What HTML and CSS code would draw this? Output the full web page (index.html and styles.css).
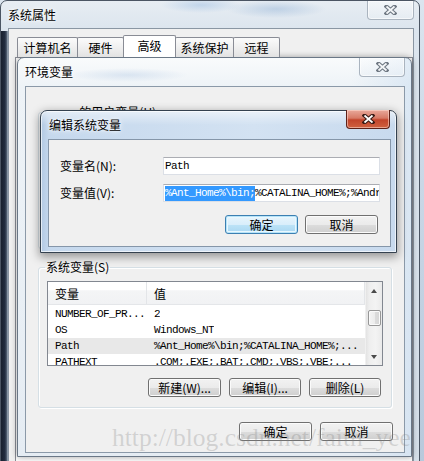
FILE: index.html
```html
<!DOCTYPE html>
<html>
<head>
<meta charset="utf-8">
<title>系统属性</title>
<link rel="stylesheet" href="styles.css">
</head>
<body>
<div class="win outer">
  <div class="titlebar"><span class="title">系统属性</span></div>
  <div class="close inactive"><svg width="13" height="10" viewBox="0 0 13 10"><path d="M2.5 1.5L10.5 8.5M10.5 1.5L2.5 8.5" class="xo"/><path d="M2.5 1.5L10.5 8.5M10.5 1.5L2.5 8.5" class="xi"/></svg></div>
  <div class="client outer-client">
    <div class="tabs">
      <div class="tab t1">计算机名</div>
      <div class="tab t2">硬件</div>
      <div class="tab t3 sel">高级</div>
      <div class="tab t4">系统保护</div>
      <div class="tab t5">远程</div>
    </div>
    <div class="tabpage"></div>
  </div>
</div>

<div class="win env">
  <div class="titlebar"><span class="title">环境变量</span></div>
  <div class="close inactive env-close"><svg width="13" height="10" viewBox="0 0 13 10"><path d="M2.5 1.5L10.5 8.5M10.5 1.5L2.5 8.5" class="xo"/><path d="M2.5 1.5L10.5 8.5M10.5 1.5L2.5 8.5" class="xi"/></svg></div>
  <div class="client env-client">
    <fieldset class="group user-group">
      <legend class="user-legend">e 的用户变量(U)</legend>
    </fieldset>
    <fieldset class="group sys-group">
      <legend>系统变量(S)</legend>
      <div class="list">
        <div class="lv-body">
          <div class="lv-head"><div class="c1">变量</div><div class="c2">值</div></div>
          <div class="lv-row"><div class="c1 m">NUMBER_OF_PR...</div><div class="c2 m">2</div></div>
          <div class="lv-row"><div class="c1 m">OS</div><div class="c2 m">Windows_NT</div></div>
          <div class="lv-row hl"><div class="c1 m">Path</div><div class="c2 m">%Ant_Home%\bin;%CATALINA_HOME%;...</div></div>
          <div class="lv-row"><div class="c1 m">PATHEXT</div><div class="c2 m">.COM;.EXE;.BAT;.CMD;.VBS;.VBE;...</div></div>
        </div>
        <div class="vscroll">
          <div class="sb-btn"><span class="arr up"></span></div>
          <div class="thumb"></div>
          <div class="sb-fill"></div>
          <div class="sb-btn"><span class="arr down"></span></div>
        </div>
      </div>
      <div class="btnrow sys-btns">
        <div class="btn w73">新建(W)...</div>
        <div class="btn w72">编辑(I)...</div>
        <div class="btn w72">删除(L)</div>
      </div>
    </fieldset>
    <div class="btnrow env-btns">
      <div class="btn w73">确定</div>
      <div class="btn w73">取消</div>
    </div>
  </div>
</div>

<div class="win edit">
  <div class="titlebar"><span class="title">编辑系统变量</span></div>
  <div class="close active"><svg width="13" height="10" viewBox="0 0 13 10"><path d="M2.5 1.5L10.5 8.5M10.5 1.5L2.5 8.5" class="xo"/><path d="M2.5 1.5L10.5 8.5M10.5 1.5L2.5 8.5" class="xi"/></svg></div>
  <div class="client edit-client">
    <div class="form">
      <div class="lbl">变量名(N):</div>
      <div class="input m">Path</div>
      <div class="lbl">变量值(V):</div>
      <div class="input m"><span class="selected">%Ant_Home%\bin;</span>%CATALINA_HOME%;%Android_SDK%</div>
    </div>
    <div class="btnrow edit-btns">
      <div class="btn def w73">确定</div>
      <div class="btn w73">取消</div>
    </div>
  </div>
</div>

<div class="watermark">http://blog.csdn.net/faith_yee</div>
</body>
</html>
```

FILE: styles.css
```css
* { box-sizing: border-box; margin: 0; padding: 0; }
html, body { width: 424px; height: 461px; overflow: hidden; }
body {
  position: relative;
  font-family: "Noto Sans CJK SC", "Noto Sans", sans-serif;
  font-size: 12px;
  color: #000;
  background: linear-gradient(to bottom, #dbe5ef 0, #c9d7e6 40%, #b8c9dc 100%);
}
.m {
  font-family: "Liberation Mono", "DejaVu Sans Mono", monospace;
  font-size: 11px;
  letter-spacing: -0.6px;
}

/* generic window */
.win {
  position: absolute;
  display: flex;
  flex-direction: column;
  border-radius: 7px 7px 0 0;
}
.titlebar {
  height: 27px;
  flex: none;
  display: flex;
  align-items: center;
}
.title {
  font-size: 12px;
  line-height: 14px;
  color: #000;
  text-shadow: 0 0 6px #fff, 0 0 3px #fff;
}
.client {
  flex: 1;
  background: #f0f0f0;
  border: 1px solid #8d9aa8;
  display: flex;
  flex-direction: column;
}

/* close buttons */
.close {
  position: absolute;
  display: flex;
  align-items: center;
  justify-content: center;
  border-radius: 0 0 4px 4px;
}
.close svg .xo { stroke-width: 4; stroke-linecap: square; fill: none; }
.close svg .xi { stroke-width: 1.7; stroke-linecap: butt; fill: none; stroke: #fff; }
.close.inactive {
  border: 1px solid #aab4bf;
  border-top: none;
  background: linear-gradient(to bottom, rgba(255,255,255,.5), rgba(235,240,245,.5));
  box-shadow: inset 0 0 0 1px rgba(255,255,255,.6);
}
.close.inactive svg .xo { stroke: #6f7883; }
.close.inactive svg .xi { stroke: #f4f6f8; }
.close.active {
  border: 1px solid #5d2118;
  border-top: none;
  background: linear-gradient(to bottom, #e9a99b 0, #d77a66 45%, #c2442b 55%, #d0613f 100%);
  box-shadow: inset 0 0 0 1px rgba(255,220,210,.55);
}
.close.active svg .xo { stroke: #3b1c16; }

/* outer window */
.outer {
  left: 0; top: 0;
  width: 420px; height: 475px;
  border: 1px solid #4b5563;
  padding: 0 5px 0 7px;
  background:
    linear-gradient(to right, #18202e 0, #222d40 4px, #596779 6px, #b9c6d3 7px) 0 30px / 8px 100% no-repeat,
    radial-gradient(ellipse 40px 8px at 200px 4px, rgba(150,185,225,.45), rgba(150,185,225,0)),
    radial-gradient(ellipse 50px 9px at 275px 8px, rgba(120,160,205,.35), rgba(120,160,205,0)),
    linear-gradient(to bottom, #e7edf3 0, #dce5ee 28px, #d5dfe9 100%);
}
.outer .close { right: 5px; top: 0; width: 47px; height: 19px; }
.outer-client {
  padding: 8px 0 0 6px;
  border-color: #8a96a3;
}
.tabs {
  display: flex;
  align-items: flex-end;
  height: 20px;
  margin-left: 2px;
  position: relative;
  z-index: 1;
}
.tab {
  height: 20px;
  border: 1px solid #898c95;
  border-bottom: none;
  border-radius: 2px 2px 0 0;
  background: linear-gradient(to bottom, #fbfbfb 0, #eeeeee 55%, #e2e2e2 100%);
  display: flex;
  align-items: center;
  justify-content: center;
  line-height: 14px;
  margin-right: -1px;
}
.t1 { width: 61px; }
.t2 { width: 47px; }
.t3 { width: 53px; }
.t4 { width: 59px; }
.t5 { width: 47px; }
.tab.sel {
  height: 22px;
  background: #fff;
  position: relative;
  z-index: 2;
  padding-bottom: 2px;
}
.tabpage {
  flex: 1;
  background: #fcfcfc;
  border: 1px solid #898c95;
}

/* environment variables window */
.env {
  left: 17px; top: 57px;
  width: 395px; height: 400px;
  border: 1px solid #6a7786;
  padding: 0 6px 3px 7px;
  background:
    radial-gradient(ellipse 60px 7px at 110px 17px, rgba(170,195,225,.35), rgba(170,195,225,0)),
    linear-gradient(to right, rgba(255,255,255,0) 85%, rgba(200,220,240,.5) 100%),
    linear-gradient(to bottom, #f9fbfc 0, #eef3f7 28px, #e5ecf3 100%);
  box-shadow: 0 0 6px rgba(0,0,0,.35);
}
.env .titlebar { height: 28px; }
.env-close { right: 6px; top: 0; width: 46px; height: 19px; }
.env-client {
  padding: 0 0 0 12px;
  border-color: #8b99a8;
}
.group {
  border: 1px solid #d5dfe5;
  border-radius: 3px;
  box-shadow: 1px 1px 0 #fff inset, 1px 1px 0 #fff;
  padding: 0 8px;
  width: 354px;
}
.group legend {
  margin-left: -2px;
  padding: 0 1px;
  line-height: 12px;
  font-size: 12px;
}
.user-group {
  margin-top: 19px;
  height: 143px;
}
.user-group .user-legend { margin-left: 22px; }
.sys-group {
  margin-top: 12px;
  height: 147px;
}

/* list view */
.list {
  margin-top: 8px;
  height: 85px;
  border: 1px solid #828790;
  background: #fff;
  display: flex;
  overflow: hidden;
}
.lv-body { flex: 1; overflow: hidden; }
.lv-head {
  height: 23px;
  display: flex;
  align-items: stretch;
  background: linear-gradient(to bottom, #ffffff 0, #ffffff 35%, #f4f5f6 40%, #f1f2f4 100%);
  border-bottom: 1px solid #e4e6e9;
  margin-bottom: 1px;
}
.lv-head .c1, .lv-head .c2 { display: flex; align-items: center; font-size: 12px; }
.lv-head .c1 { border-right: 1px solid #e3e5e8; }
.lv-head .c2 { flex: 1; border-right: 1px solid #e3e5e8; }
.c1 { width: 99px; padding-left: 7px; flex: none; white-space: nowrap; overflow: hidden; }
.c2 { padding-left: 7px; white-space: nowrap; overflow: hidden; }
.lv-row {
  height: 16px;
  display: flex;
  align-items: center;
  line-height: 16px;
}
.lv-row .c1 { border-right: 1px solid transparent; }
.lv-row.hl { background: #e8e8e8; }

.vscroll {
  width: 17px;
  flex: none;
  display: flex;
  flex-direction: column;
  background: linear-gradient(to right, #e3e3e3 0, #eeeeee 20%, #f3f3f3 60%, #eaeaea 100%);
  border-left: 1px solid #f0f0f0;
}
.sb-btn {
  height: 17px;
  flex: none;
  display: flex;
  align-items: center;
  justify-content: center;
}
.arr { width: 0; height: 0; border-left: 3.5px solid transparent; border-right: 3.5px solid transparent; }
.arr.up { border-bottom: 4px solid #4a4a4a; }
.arr.down { border-top: 4px solid #4a4a4a; }
.thumb {
  margin: 11px 1px 0 2px;
  height: 16px;
  flex: none;
  border: 1px solid #979797;
  border-radius: 2px;
  background: linear-gradient(to right, #f4f4f4 0, #ececec 50%, #dcdcdc 51%, #d6d6d6 100%);
  box-shadow: inset 0 0 0 1px #fafafa;
}
.sb-fill { flex: 1; }

/* buttons */
.btnrow { display: flex; justify-content: flex-end; gap: 8px; }
.btn {
  height: 19px;
  border: 1px solid #707070;
  border-radius: 3px;
  background: linear-gradient(to bottom, #f2f2f2 0, #ebebeb 50%, #dddddd 51%, #cfcfcf 100%);
  box-shadow: inset 0 0 0 1px #fbfbfb;
  display: flex;
  align-items: center;
  justify-content: center;
  line-height: 14px;
  font-size: 12px;
  white-space: nowrap;
}
.btn.def {
  border-color: #3c7fb1;
  background: linear-gradient(to bottom, #e8f5fc 0, #d9eefb 50%, #bde3f7 51%, #a9d7f2 100%);
  box-shadow: inset 0 0 0 1px #b6e4f9, inset 0 0 0 2px #e9f7fe;
}
.w73 { width: 73px; }
.w72 { width: 72px; }
.sys-btns { margin-top: 12px; margin-right: 2px; }
.env-btns { margin-top: 14px; margin-right: 11px; }

/* edit dialog */
.edit {
  left: 40px; top: 110px;
  width: 357px; height: 143px;
  border: 1px solid #34414f;
  padding: 0 5px 5px 7px;
  background:
    linear-gradient(to bottom, rgba(255,255,255,.55) 0, rgba(255,255,255,0) 14px),
    linear-gradient(to right, #b2c9e3 0, #c5d8ed 8px, #d3e2f2 60%, #c8daee 100%);
  box-shadow: 0 3px 10px 1px rgba(0,0,0,.38), inset 0 0 0 1px rgba(255,255,255,.65);
}
.edit .titlebar { height: 28px; padding-left: 1px; }
.edit .close { right: 6px; top: -1px; width: 44px; height: 19px; }
.edit-client {
  border-color: #8596a9;
  padding: 17px 11px 0 11px;
}
.form {
  display: grid;
  grid-template-columns: 103px 217px;
  row-gap: 9px;
  align-items: center;
}
.lbl { font-size: 12px; line-height: 18px; }
.input {
  height: 18px;
  background: #fff;
  border: 1px solid #dbdfe6;
  border-top-color: #abadb3;
  padding: 0 3px 0 1px;
  line-height: 16px;
  white-space: nowrap;
  overflow: hidden;
}
.selected { background: #3399ff; color: #fff; display: inline-block; line-height: 15px; }
.edit-btns { margin-top: 13px; gap: 7px; margin-right: 1px; }

/* watermark */
.watermark {
  position: absolute;
  left: 112px;
  top: 423px;
  font-family: "Liberation Serif", serif;
  font-size: 25.5px;
  line-height: 29px;
  color: rgba(130,130,130,.28);
  white-space: nowrap;
  pointer-events: none;
}
```
